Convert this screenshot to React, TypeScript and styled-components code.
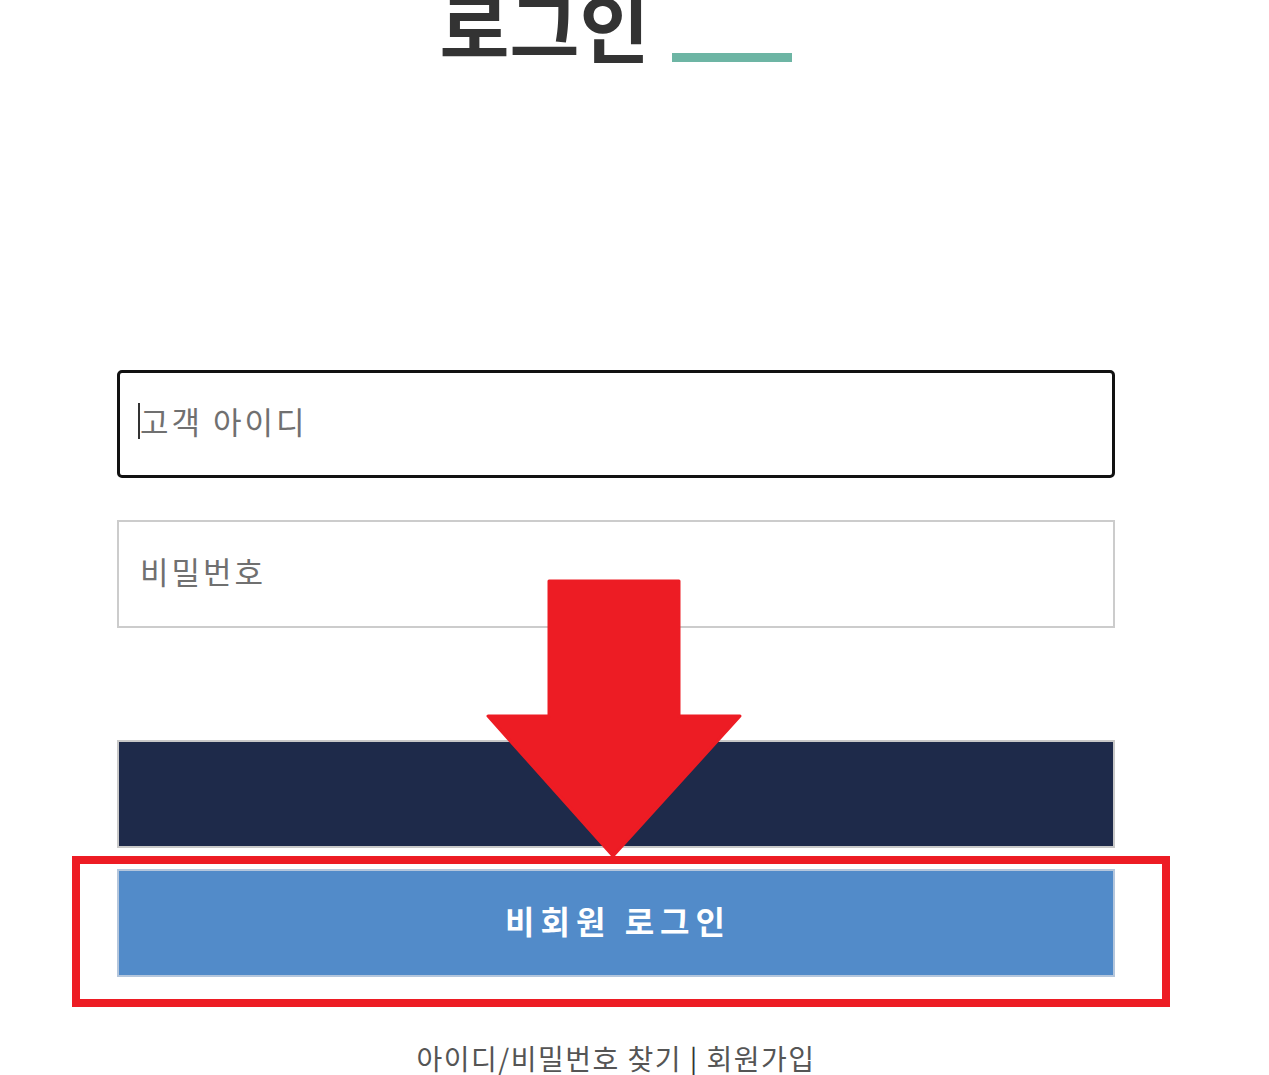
import React from "react";
import styled, { createGlobalStyle } from "styled-components";

const GlobalStyle = createGlobalStyle`
  html, body {
    margin: 0;
    padding: 0;
    background: #ffffff;
    font-family: "Noto Sans CJK KR", "Noto Sans", sans-serif;
  }
  * { box-sizing: border-box; }
`;

const Page = styled.div`
  position: relative;
  width: 1269px;
  height: 1075px;
  overflow: hidden;
  padding-left: 117px;
`;

const Column = styled.div`
  width: 998px;
  display: flex;
  flex-direction: column;
`;

const Header = styled.header`
  height: 62px;
  display: flex;
  justify-content: center;
  align-items: flex-end;
`;

const Title = styled.h1`
  margin: 0;
  font-size: 76px;
  line-height: 76px;
  font-weight: 700;
  color: #333333;
  letter-spacing: 0;
`;

const Accent = styled.span`
  display: block;
  width: 120px;
  height: 9px;
  margin-left: 23px;
  background: #6db5a4;
`;

const Form = styled.form`
  margin-top: 308px;
  display: flex;
  flex-direction: column;
`;

const Field = styled.div<{ $gap?: number }>`
  position: relative;
  margin-top: ${(p) => p.$gap ?? 0}px;
`;

const TextInput = styled.input<{ $focused?: boolean }>`
  display: block;
  width: 100%;
  height: 108px;
  border: ${(p) => (p.$focused ? "3px solid #111111" : "2px solid #cccccc")};
  border-radius: ${(p) => (p.$focused ? "5px" : "0")};
  padding: 0 0 8px ${(p) => (p.$focused ? 20 : 21)}px;
  font-family: "Noto Sans CJK KR", "Noto Sans", sans-serif;
  font-size: 31px;
  letter-spacing: 3px;
  color: #333;
  background: #fff;
  outline: none;
  &::placeholder {
    color: #707070;
  }
`;

const Caret = styled.span`
  position: absolute;
  left: 21px;
  top: 33px;
  width: 1.5px;
  height: 36px;
  background: #333;
`;

const Button = styled.button<{ $variant: "primary" | "guest"; $gap: number }>`
  display: flex;
  align-items: center;
  justify-content: center;
  width: 100%;
  height: 108px;
  margin-top: ${(p) => p.$gap}px;
  border: 2px solid ${(p) => (p.$variant === "primary" ? "#c8c8c8" : "#b4c6dc")};
  background: ${(p) => (p.$variant === "primary" ? "#1e2a4a" : "#528bc9")};
  color: #ffffff;
  font-family: "Noto Sans CJK KR", "Noto Sans", sans-serif;
  font-size: 32px;
  font-weight: 700;
  letter-spacing: 6px;
  padding: 0 0 6px 4px;
  cursor: pointer;
`;

const Links = styled.div`
  margin-top: 61px;
  text-align: center;
  font-size: 28px;
  line-height: 40px;
  letter-spacing: 1.5px;
  color: #555555;
  white-space: pre;
`;

const LinkText = styled.a`
  color: inherit;
  text-decoration: none;
`;

const Divider = styled.span`
  color: #333;
`;

const Highlight = styled.div`
  position: absolute;
  left: 72px;
  top: 856px;
  width: 1098px;
  height: 151px;
  border: 8px solid #ed1c24;
  pointer-events: none;
`;

const ArrowSvg = styled.svg`
  position: absolute;
  left: 486px;
  top: 579px;
  pointer-events: none;
`;

function DownArrow() {
  return (
    <ArrowSvg width="256" height="280" viewBox="0 0 256 280">
      <polygon
        points="63,2 193,2 193,137 254,137 127,277 2,137 63,137"
        fill="#ed1c24"
        stroke="#ed1c24"
        strokeWidth="3"
        strokeLinejoin="round"
      />
    </ArrowSvg>
  );
}

export default function App() {
  return (
    <>
      <GlobalStyle />
      <Page>
        <Column>
          <Header>
            <Title>로그인</Title>
            <Accent />
          </Header>
          <Form onSubmit={(e) => e.preventDefault()}>
            <Field>
              <TextInput $focused placeholder="고객 아이디" />
              <Caret />
            </Field>
            <Field $gap={42}>
              <TextInput type="password" placeholder="비밀번호" />
            </Field>
            <Button type="submit" $variant="primary" $gap={112} aria-label="로그인" />
            <Button type="button" $variant="guest" $gap={21}>
              비회원 로그인
            </Button>
          </Form>
          <Links>
            <LinkText href="#">아이디/비밀번호 찾기</LinkText>
            <Divider> | </Divider>
            <LinkText href="#">회원가입</LinkText>
          </Links>
        </Column>
        <Highlight />
        <DownArrow />
      </Page>
    </>
  );
}
